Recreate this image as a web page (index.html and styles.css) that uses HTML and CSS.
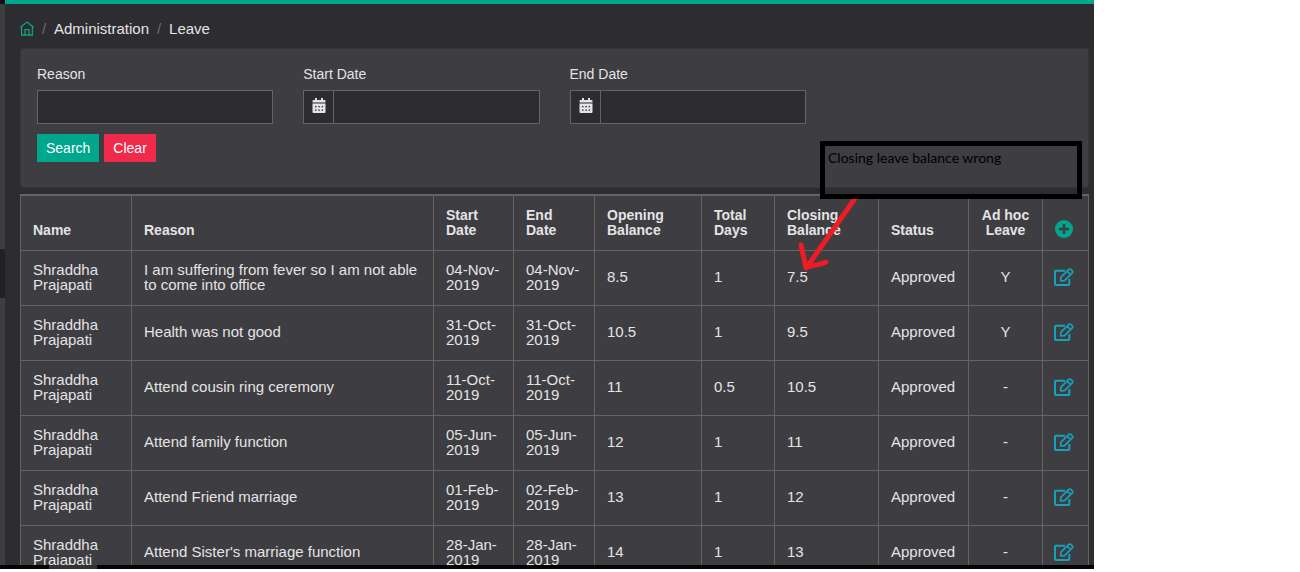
FILE: index.html
```html
<!DOCTYPE html>
<html lang="en">
<head>
<meta charset="utf-8">
<title>Leave</title>
<link rel="stylesheet" href="styles.css">
</head>
<body>
<svg class="defs" aria-hidden="true">
  <symbol id="i-edit" viewBox="0 0 20 18">
    <path d="M11 2.700H1.800a.8.8 0 0 0-.8.8V16.200a.8.8 0 0 0 .8.8h12.700a.8.8 0 0 0 .8-.8V11" fill="none" stroke="currentColor" stroke-width="2"/>
    <path d="M6.600 12.400l.4-3.300 7.800-7.700a1.400 1.400 0 0 1 2 0l1.500 1.500a1.400 1.400 0 0 1 0 2L10.600 12.600l-3.600.400zM13.200 3.200l3.300 3.300" fill="none" stroke="currentColor" stroke-width="1.700" stroke-linejoin="round"/>
  </symbol>
  <symbol id="i-cal" viewBox="0 0 14 15">
    <path fill="currentColor" fill-rule="evenodd" d="M3 0h2v2h4V0h2v2h1.500A1 1 0 0 1 13.500 3v1.500H.5V3a1 1 0 0 1 1-1H3zM.5 5.500h13V14a1 1 0 0 1-1 1h-11a1 1 0 0 1-1-1zM3 8v1.200h1.500V8zM6.300 8v1.200h1.500V8zM9.600 8v1.200h1.500V8zM3 11.500v1.200h1.500v-1.200zM6.300 11.500v1.200h1.500v-1.200zM9.600 11.500v1.200h1.500v-1.200z"/>
  </symbol>
</svg>
<div class="app">
  <div class="shell">
    <aside class="rail"><div class="rail-active"></div></aside>
    <main class="main">
      <nav class="crumbs" aria-label="Breadcrumb">
        <a class="home" href="#" aria-label="Home"><svg width="14" height="15" viewBox="0 0 14 15" fill="none" stroke="currentColor" stroke-width="1.300"><path d="M.4 6.200L7 1l6.600 5.200M1.600 5.500v8.500h10.800V5.500M5 14V8.600h4V14"/></svg></a>
        <span class="sep">/</span><a href="#">Administration</a><span class="sep">/</span><span>Leave</span>
      </nav>
      <form class="panel">
        <div class="fields">
          <div class="field"><label for="reason">Reason</label><input class="box" id="reason" type="text"></div>
          <div class="field"><label for="start">Start Date</label><div class="box group"><svg width="14" height="15"><use href="#i-cal"/></svg><input id="start" type="text"></div></div>
          <div class="field"><label for="end">End Date</label><div class="box group"><svg width="14" height="15"><use href="#i-cal"/></svg><input id="end" type="text"></div></div>
        </div>
        <div class="actions"><button class="btn search" type="button">Search</button><button class="btn clear" type="button">Clear</button></div>
      </form>
      <table class="grid">
        <colgroup><col class="c-name"><col class="c-reason"><col class="c-start"><col class="c-end"><col class="c-open"><col class="c-days"><col class="c-close"><col class="c-status"><col class="c-adhoc"><col class="c-act"></colgroup>
        <thead><tr><th>Name</th><th>Reason</th><th>Start Date</th><th>End Date</th><th>Opening Balance</th><th>Total Days</th><th>Closing Balance</th><th>Status</th><th class="mid">Ad hoc Leave</th><th class="act"><button class="icon add" type="button" aria-label="Add"><svg width="18" height="18" viewBox="0 0 18 18"><circle cx="9" cy="9" r="9" fill="currentColor"/><path class="plus" d="M9 4v10M4 9h10"/></svg></button></th></tr></thead>
        <tbody>
          <tr><td>Shraddha Prajapati</td><td>I am suffering from fever so I am not able to come into office</td><td>04-Nov-2019</td><td>04-Nov-2019</td><td>8.5</td><td>1</td><td>7.5</td><td>Approved</td><td class="mid">Y</td><td class="act"><button class="icon" type="button" aria-label="Edit"><svg width="20" height="18"><use href="#i-edit"/></svg></button></td></tr>
          <tr><td>Shraddha Prajapati</td><td>Health was not good</td><td>31-Oct-2019</td><td>31-Oct-2019</td><td>10.5</td><td>1</td><td>9.5</td><td>Approved</td><td class="mid">Y</td><td class="act"><button class="icon" type="button" aria-label="Edit"><svg width="20" height="18"><use href="#i-edit"/></svg></button></td></tr>
          <tr><td>Shraddha Prajapati</td><td>Attend cousin ring ceremony</td><td>11-Oct-2019</td><td>11-Oct-2019</td><td>11</td><td>0.5</td><td>10.5</td><td>Approved</td><td class="mid">-</td><td class="act"><button class="icon" type="button" aria-label="Edit"><svg width="20" height="18"><use href="#i-edit"/></svg></button></td></tr>
          <tr><td>Shraddha Prajapati</td><td>Attend family function</td><td>05-Jun-2019</td><td>05-Jun-2019</td><td>12</td><td>1</td><td>11</td><td>Approved</td><td class="mid">-</td><td class="act"><button class="icon" type="button" aria-label="Edit"><svg width="20" height="18"><use href="#i-edit"/></svg></button></td></tr>
          <tr><td>Shraddha Prajapati</td><td>Attend Friend marriage</td><td>01-Feb-2019</td><td>02-Feb-2019</td><td>13</td><td>1</td><td>12</td><td>Approved</td><td class="mid">-</td><td class="act"><button class="icon" type="button" aria-label="Edit"><svg width="20" height="18"><use href="#i-edit"/></svg></button></td></tr>
          <tr><td>Shraddha Prajapati</td><td>Attend Sister's marriage function</td><td>28-Jan-2019</td><td>28-Jan-2019</td><td>14</td><td>1</td><td>13</td><td>Approved</td><td class="mid">-</td><td class="act"><button class="icon" type="button" aria-label="Edit"><svg width="20" height="18"><use href="#i-edit"/></svg></button></td></tr>
        </tbody>
      </table>
    </main>
  </div>
  <div class="taskbar"><div class="taskbar-item"></div></div>
  <svg class="arrow" width="66" height="80" viewBox="0 0 66 80" fill="none" stroke="#ee1c24" stroke-width="5" stroke-linecap="round" stroke-linejoin="round"><path d="M60 3L11 73M5 51l5 23M10 73c6-1 13-2 20-5"/></svg>
  <div class="note">Closing leave balance wrong</div>
</div>
</body>
</html>
```

FILE: styles.css
```css
* { box-sizing: border-box; }

body {
  margin: 0;
  display: grid;
  grid-template-columns: minmax(0, 1094fr) 206fr;
  background: #fff;
  color: #e4e4e4;
  font: 15px/15px "Liberation Sans", Arial, sans-serif;
}

.defs { position: absolute; width: 0; height: 0; }

.app {
  position: relative;
  display: flex;
  flex-direction: column;
  height: calc(100vh - 3px);
  overflow: hidden;
  background: #2d2c31;
}

.shell { flex: 1; min-height: 0; display: flex; overflow: hidden; }

.rail {
  flex: none;
  width: 5px;
  padding-top: 245px;
  border-top: 4px solid #111;
  background: #3e3d42;
}
.rail-active { height: 49px; background: #212121; }

.main {
  flex: 1;
  min-width: 0;
  padding: 13px 5px 0 15px;
  border-top: 4px solid #00a78d;
}

.crumbs { display: flex; align-items: center; height: 22px; margin-bottom: 9px; }
.crumbs a { color: inherit; text-decoration: none; }
.crumbs .home { display: flex; color: #0fa17f; }
.sep { width: 20px; text-align: center; color: #6c6b70; }

.panel {
  height: 140px;
  padding: 16px;
  border: 1px solid #37353b;
  border-radius: 3px;
  background: #3e3d42;
}
.fields { display: grid; grid-template-columns: repeat(4, 1fr); gap: 30px; }
.field { display: flex; flex-direction: column; gap: 7px; }
.field label { font-size: 14px; line-height: 18px; }

.box { width: 100%; height: 34px; border: 1px solid #646464; background: #2d2c31; }
.box, .group input { padding: 0; border-radius: 0; color: #e4e4e4; font: inherit; }
.group { display: flex; align-items: center; }
.group svg { flex: none; margin: 0 7px 4px 8px; }
.group input { flex: 1; min-width: 0; height: 32px; border: 0; border-left: 1px solid #646464; background: none; }

.actions { display: flex; gap: 5px; margin-top: 10px; }
.btn {
  height: 28px;
  padding: 0 9px;
  border: 0;
  color: #fff;
  font: 14px/28px "Liberation Sans", Arial, sans-serif;
}
.search { background: #00a78d; }
.clear { background: #ef2a4a; }

.grid {
  width: 100%;
  margin-top: 6px;
  border-collapse: collapse;
  border-top: 2px solid #646464;
  table-layout: fixed;
  background: #3e3d42;
}
.c-name { width: 111px; }
.c-start { width: 80px; }
.c-end { width: 81px; }
.c-open { width: 107px; }
.c-days { width: 73px; }
.c-close { width: 104px; }
.c-status { width: 90px; }
.c-adhoc { width: 74px; }
.c-act { width: 46px; }

th, td { height: 55px; padding: 0 12px 2px; border: 1px solid #646464; text-align: left; }
th { padding: 11px 12px 12px; border-top-width: 2px; font-size: 14px; vertical-align: bottom; }
td { vertical-align: middle; }
.grid .mid { text-align: center; }
.grid .act { padding-left: 0; padding-right: 3px; text-align: center; }

.icon { display: block; margin: 0 auto; padding: 0; border: 0; background: none; color: #16a2b8; }
.icon svg { display: block; }
.add { color: #00a78d; }
.plus { stroke: #3e3d42; stroke-width: 2.5; }

.taskbar { flex: none; height: 4px; padding-left: 49px; background: #030406; }
.taskbar-item { width: 48px; height: 4px; background: #303234; }

.note {
  position: absolute;
  top: 141px;
  right: 12px;
  width: 262px;
  height: 58px;
  padding: 4px 3px;
  border: 5px solid #000;
  color: #000;
  font: 14px/16px Lato, "Open Sans", sans-serif;
}
.arrow { position: absolute; top: 194px; right: 232px; }
```
